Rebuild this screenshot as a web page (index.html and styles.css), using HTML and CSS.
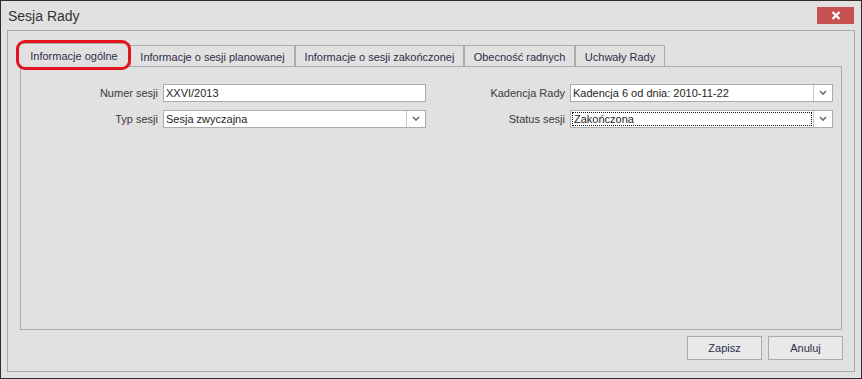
FILE: index.html
```html
<!DOCTYPE html>
<html lang="pl">
<head>
  <meta charset="UTF-8">
  <title>Sesja Rady</title>
  <link rel="stylesheet" href="styles.css">
</head>
<body>

<div class="window">
  <div class="titlebar">
    <span class="title">Sesja Rady</span>
    <button class="close-btn" title="Zamknij">
      <svg width="10" height="9" viewBox="0 0 10 9">
        <path d="M1.5 1 L8.5 8 M8.5 1 L1.5 8" stroke="#fff" stroke-width="2.2" fill="none"/>
      </svg>
    </button>
  </div>

  <div class="group">
    <div class="tabs">
      <div class="tab tab-general active">Informacje ogólne</div>
      <div class="tab tab-planned">Informacje o sesji planowanej</div>
      <div class="tab tab-finished">Informacje o sesji zakończonej</div>
      <div class="tab tab-presence">Obecność radnych</div>
      <div class="tab tab-resolutions">Uchwały Rady</div>
    </div>

    <div class="tab-page">
      <div class="form">
        <label class="lbl">Numer sesji</label>
        <div class="field"><span class="value">XXVI/2013</span></div>

        <label class="lbl">Kadencja Rady</label>
        <div class="field combo">
          <span class="value">Kadencja 6 od dnia: 2010-11-22</span>
          <span class="arrow"><svg width="8" height="6" viewBox="0 0 8 6"><path d="M1 1 L4 4 L7 1" stroke="#707070" stroke-width="1.6" fill="none"/></svg></span>
        </div>

        <label class="lbl">Typ sesji</label>
        <div class="field combo">
          <span class="value">Sesja zwyczajna</span>
          <span class="arrow"><svg width="8" height="6" viewBox="0 0 8 6"><path d="M1 1 L4 4 L7 1" stroke="#707070" stroke-width="1.6" fill="none"/></svg></span>
        </div>

        <label class="lbl">Status sesji</label>
        <div class="field combo focused">
          <span class="value">Zakończona</span>
          <span class="arrow"><svg width="8" height="6" viewBox="0 0 8 6"><path d="M1 1 L4 4 L7 1" stroke="#707070" stroke-width="1.6" fill="none"/></svg></span>
        </div>
      </div>
    </div>

    <div class="buttons">
      <button class="btn">Zapisz</button>
      <button class="btn">Anuluj</button>
    </div>
  </div>
</div>

</body>
</html>
```

FILE: styles.css
```css
* {
  box-sizing: border-box;
}

body {
  margin: 0;
  background-color: #e1e1e1;
  font-family: "Liberation Sans", Arial, sans-serif;
}

.window {
  width: 862px;
  height: 379px;
  border: 1px solid #2e2e2e;
  background-color: #e1e1e1;
  display: flex;
  flex-direction: column;
}

.titlebar {
  height: 29px;
  display: flex;
  align-items: flex-start;
  justify-content: space-between;
  padding-left: 7px;
}

.title {
  font-size: 14px;
  color: #333;
  margin-top: 7px;
}

.close-btn {
  width: 37px;
  height: 17px;
  margin: 6px 7px 0 0;
  border: none;
  background-color: #c75050;
  display: flex;
  align-items: center;
  justify-content: center;
  padding: 0;
}

.group {
  margin: 0 6px 6px 6px;
  flex: 1;
  border: 1px solid #a9a9a9;
  padding: 12px 12px 0 12px;
  display: flex;
  flex-direction: column;
}

.tabs {
  display: flex;
  height: 23px;
  align-items: flex-end;
  position: relative;
  z-index: 1;
}

.tab {
  height: 21px;
  border: 1px solid #acacac;
  border-bottom: none;
  font-size: 11px;
  color: #2e2e48;
  display: flex;
  align-items: center;
  justify-content: center;
  padding-top: 1px;
}

.tab-general { width: 112px; }
.tab-planned { width: 165px; }
.tab-finished { width: 169px; }
.tab-presence { width: 111px; }
.tab-resolutions { width: 90px; }

.tab.active {
  height: 24px;
  margin-left: -2px;
  margin-bottom: -1px;
  background-color: #e1e1e1;
  position: relative;
}

/* red marker drawn around the selected tab */
.tab.active::after {
  content: "";
  position: absolute;
  left: -3px;
  right: -2px;
  top: -4px;
  bottom: -3px;
  border: 3px solid #e3141c;
  border-radius: 9px;
}

.tab-page {
  height: 264px;
  border: 1px solid #acacac;
}

.form {
  display: grid;
  grid-template-columns: 137px 263px 134px 263px;
  column-gap: 5px;
  row-gap: 8px;
  padding-top: 17px;
}

.lbl {
  text-align: right;
  font-size: 11px;
  color: #3a3a3a;
  line-height: 18px;
}

.field {
  height: 18px;
  border: 1px solid #ababab;
  background-color: #fff;
  font-size: 11px;
  color: #1e1e1e;
  display: flex;
  align-items: stretch;
}

.value {
  flex: 1;
  padding-left: 2px;
  line-height: 16px;
}

.combo .arrow {
  width: 19px;
  border-left: 1px solid #c8c8c8;
  display: flex;
  align-items: center;
  justify-content: center;
}

.focused .value {
  border: 1px dotted #111;
  margin: 1px;
  padding-left: 1px;
  line-height: 12px;
}

.buttons {
  display: flex;
  justify-content: flex-end;
  gap: 6px;
  margin-top: 6px;
  margin-right: -1px;
}

.btn {
  width: 75px;
  height: 24px;
  border: 1px solid #adadad;
  background-color: #e9e9e9;
  font-family: "Liberation Sans", Arial, sans-serif;
  font-size: 11px;
  color: #2e2e48;
  padding: 0;
}
```
